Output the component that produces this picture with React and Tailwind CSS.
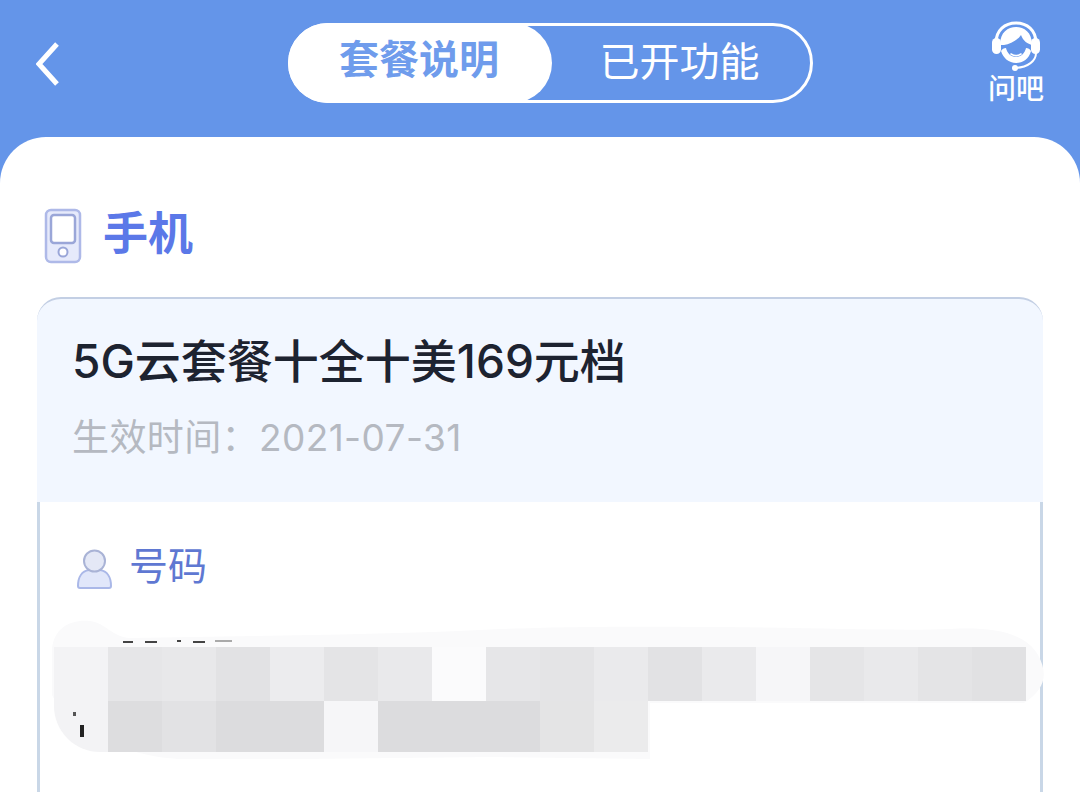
import React from "react";

const rowOne = [
  "#f3f3f5", "#e6e6e8", "#e8e8ea", "#e2e2e4", "#ececee", "#e4e4e6", "#e9e9eb", "#fbfbfc", "#e6e6e8",
  "#e4e4e6", "#eaeaec", "#e2e2e4", "#eaeaec", "#f6f6f8", "#e5e5e7", "#e9e9eb", "#e4e4e6", "#e1e1e3",
];
const rowTwo = [
  "#f3f3f5", "#dddddf", "#e2e2e4", "#dcdcde", "#dcdcde", "#f6f6f8", "#dcdcde", "#dcdcde", "#dcdcde",
  "#e4e4e5", "#ebebec",
];

function HeadsetIcon() {
  return (
    <svg width="54" height="52" viewBox="0 0 54 52" fill="none">
      <path d="M7 22C7 9 16 2 27 2s20 7 20 20" stroke="#fff" strokeWidth="3" />
      <path d="M11 24C11 11 19 6 27 6s16 5 16 18c-4-1-9-4-11-10-3 5-11 9-17 10z" fill="#fff" />
      <rect x="3" y="17" width="9" height="16" rx="4.5" fill="#fff" />
      <rect x="42" y="17" width="9" height="16" rx="4.5" fill="#fff" />
      <path d="M12 30c2 7 8 12 15 12s13-4 15-12c-1-2-3-3-5-3-1 5-5 9-10 9s-9-4-10-9c-2 0-4 1-5 3z" fill="#fff" />
      <path d="M22 33c3 2 7 2 10 0" stroke="#fff" strokeWidth="1.6" strokeLinecap="round" />
      <path d="M47 32c0 8-8 14-20 15" stroke="#fff" strokeWidth="2" />
      <circle cx="26" cy="47" r="3" fill="#fff" />
    </svg>
  );
}

function PhoneIcon() {
  return (
    <svg width="38" height="56" viewBox="0 0 38 56" fill="none">
      <rect x="2" y="2" width="34" height="52" rx="5" fill="#e6eafb" stroke="#aeb9e8" strokeWidth="2.5" />
      <rect x="7" y="7" width="24" height="28" rx="3" fill="#fff" stroke="#9aa6d8" strokeWidth="2.5" />
      <circle cx="19" cy="44" r="4.5" fill="#fff" stroke="#9aa6d8" strokeWidth="2" />
    </svg>
  );
}

function PersonIcon() {
  return (
    <svg width="37" height="42" viewBox="0 0 37 42" fill="none">
      <path d="M2 38c0-9 4-15 11-16h11c7 1 11 7 11 16 0 1-1 2-2 2H4c-1 0-2-1-2-2z" fill="#e1e7fa" stroke="#aab8e8" strokeWidth="2" />
      <circle cx="18.5" cy="13" r="10.5" fill="#e4e8f6" stroke="#a9b3d6" strokeWidth="2" />
    </svg>
  );
}

// the blurred-out phone number
function Redacted() {
  return (
    <div className="relative mt-[57px] h-[107px] ml-[14px]">
      <svg className="absolute left-[-4px] top-[-28px]" width="1000" height="140" viewBox="0 0 1000 140" fill="none">
        <path
          d="M2 30C4 8 22 0 40 2c16 2 22 16 40 17 120-2 240-3 350-8 60-3 120-4 240-3 100 1 180 4 230 2 40-2 74 2 88 26 10 18 8 34-14 48H600v56l-160-2-280 3c-60 0-100-8-150-50L2 76z"
          fill="#fafafb"
        />
      </svg>
      <svg className="absolute left-[30px] top-[-8px]" width="200" height="12" viewBox="0 0 200 12" fill="none">
        <path d="M39 3h10M61 3h12M93 2h4M109 3h12" stroke="#444" strokeWidth="2" />
        <path d="M131 2h17" stroke="#aaa" strokeWidth="2" />
      </svg>
      <div className="relative flex h-[54px]">
        {rowOne.map((color, i) => (
          <div key={i} className="w-[54px] shrink-0" style={{ backgroundColor: color }} />
        ))}
      </div>
      <div className="relative flex h-[51px]">
        {rowTwo.map((color, i) => (
          <div
            key={i}
            className={i === 0 ? "w-[54px] shrink-0 rounded-bl-[46px]" : "w-[54px] shrink-0"}
            style={{ backgroundColor: color }}
          />
        ))}
      </div>
      <div className="absolute left-[19px] top-[65px] h-[4px] w-[3px] bg-[#555]" />
      <div className="absolute left-[26px] top-[78px] h-[12px] w-[4px] bg-[#222]" />
    </div>
  );
}

export default function App() {
  return (
    <div
      className="h-[792px] w-[1080px] overflow-hidden bg-[#6495e9]"
      style={{ fontFamily: '"Liberation Sans", "Noto Sans CJK SC", sans-serif' }}
    >
      {/* Header */}
      <div className="flex h-[137px] items-start pl-[36px]">
        <div className="w-[252px] pt-[41px]">
          <svg width="24" height="46" viewBox="0 0 24 46" fill="none">
            <path d="M21 3L3 23l18 20" stroke="#fff" strokeWidth="5" />
          </svg>
        </div>
        <div className="mt-[23px] flex h-[80px] w-[525px] rounded-full border-[3px] border-white">
          <div className="-my-[3px] -ml-[3px] flex w-[264px] items-center justify-center rounded-full bg-white pb-[6px] pr-[2px] text-[40px] font-bold leading-none text-[#6f9cec]">
            套餐说明
          </div>
          <div className="flex flex-1 items-center justify-center pb-[3px] pr-[3px] text-[40px] leading-none text-white">
            已开功能
          </div>
        </div>
        <div className="ml-[174px] mt-[21px] flex w-[58px] flex-col items-center">
          <HeadsetIcon />
          <span className="mt-[1px] text-[28px] font-medium leading-[32px] text-white">问吧</span>
        </div>
      </div>

      {/* Sheet */}
      <div className="h-[655px] rounded-t-[46px] bg-white px-[37px]">
        <div className="flex h-[160px] items-start pt-[71px]">
          <div className="ml-[7px]">
            <PhoneIcon />
          </div>
          <h1 className="ml-[21px] mt-[-1px] text-[45px] font-bold leading-[56px] text-[#5b78e8]">手机</h1>
        </div>

        <div
          className="h-[205px] rounded-t-[24px] border-t-2 border-[#c3cfe4] bg-[#f2f7ff] pl-[35px]"
          style={{ fontFamily: 'Inter, "Noto Sans CJK SC", sans-serif' }}
        >
          <div className="pt-[32px] text-[46px] font-medium leading-[60px] text-[#1d2330]">5G云套餐十全十美169元档</div>
          <div className="mt-[25px] text-[37px] leading-[44px] tracking-[0.4px] text-[#b5b9c1]">生效时间：2021-07-31</div>
        </div>

        <div className="h-[300px] border-x-[3px] border-[#c9d7e7]">
          <div className="flex items-center pl-[36px] pt-[46px]">
            <PersonIcon />
            <span className="ml-[16px] mt-[-4px] text-[39px] leading-[46px] text-[#5f78d2]">号码</span>
          </div>
          <Redacted />
        </div>
      </div>
    </div>
  );
}
